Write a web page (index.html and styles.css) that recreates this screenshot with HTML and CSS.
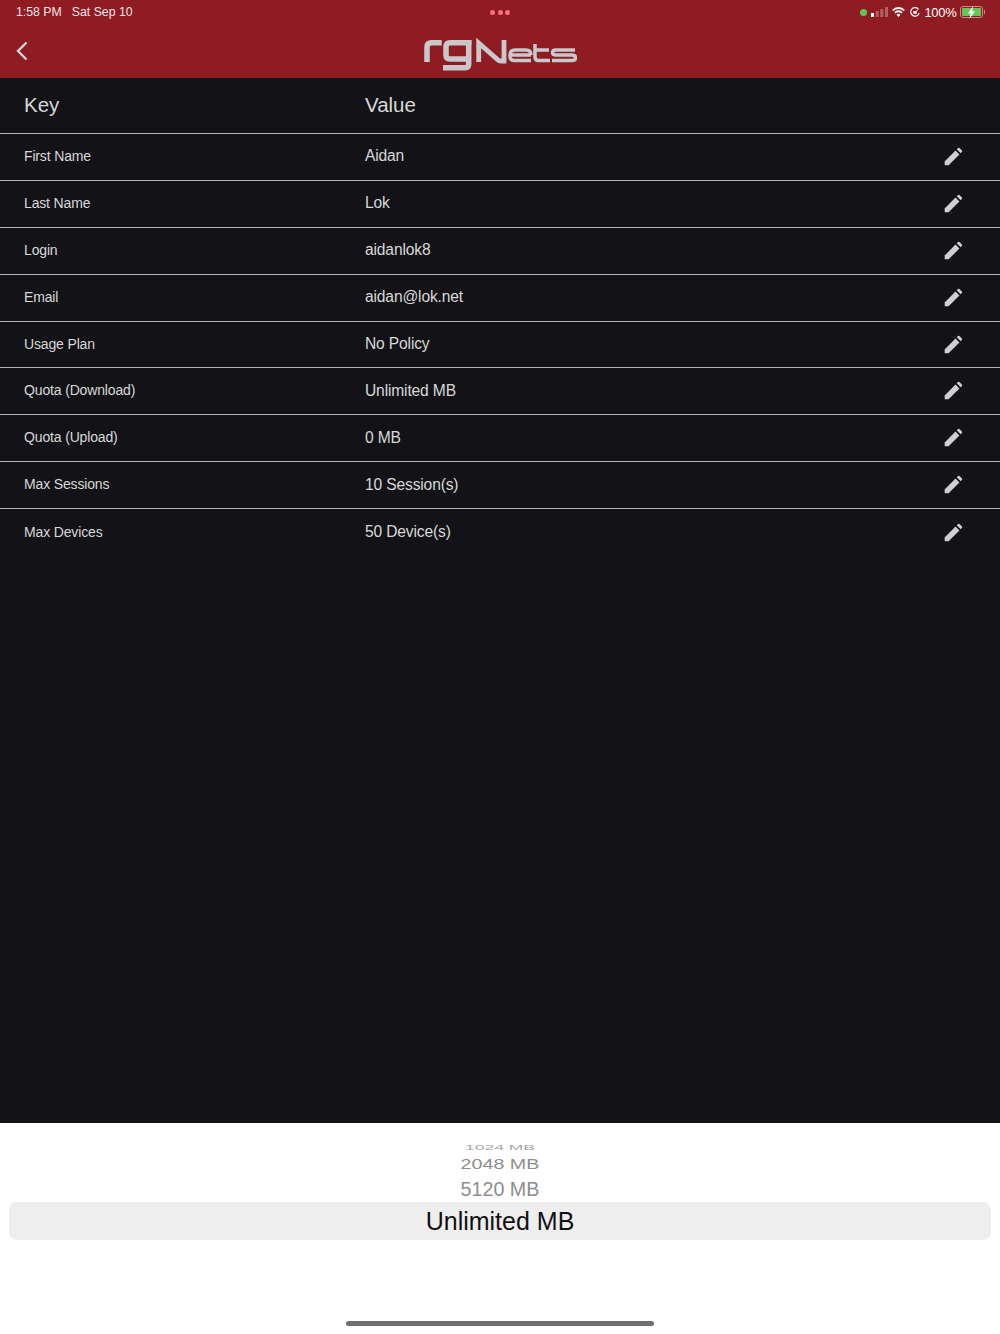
FILE: index.html
```html
<!DOCTYPE html>
<html lang="en">
<head>
  <meta charset="UTF-8" />
  <title>rgNets</title>
  <link rel="stylesheet" href="styles.css">
</head>
<body>
  <div class="app">
    <header class="topbar">
      <div class="status">
        <div class="status-left"><span>1:58 PM</span><span>Sat Sep 10</span></div>
        <div class="dots"><i></i><i></i><i></i></div>
        <div class="status-right">
          <i class="green-dot"></i>
          <svg class="signal" width="17" height="10" viewBox="0 0 17 10">
            <rect x="0" y="6" width="3" height="4" fill="#fff"/>
            <rect x="4.700" y="4" width="3" height="6" fill="#fff" opacity=".3"/>
            <rect x="9.300" y="2" width="3" height="8" fill="#fff" opacity=".3"/>
            <rect x="14" y="0" width="3" height="10" fill="#fff" opacity=".3"/>
          </svg>
          <svg class="wifi" width="13" height="10" viewBox="0 0 13 10" fill="none" stroke="#fff" stroke-width="1.800">
            <path d="M.7 3.500a8 8 0 0 1 11.600 0"/>
            <path d="M2.900 5.800a5 5 0 0 1 7.200 0"/>
            <path d="M6.500 10 4.500 7.800a2.800 2.800 0 0 1 4 0z" fill="#fff" stroke="none"/>
          </svg>
          <svg class="rotation" width="10" height="10" viewBox="0 0 10 10" fill="none" stroke="#fff" stroke-width="1.200">
            <path d="M9.200 6A4.300 4.300 0 1 1 7.700 1.500"/>
            <path d="M6.300.4 8.300 1.700 7 3.700" stroke-width="1"/>
            <rect x="3.300" y="4" width="3.400" height="2.800" fill="#fff" stroke="none"/>
          </svg>
          <span class="pct">100%</span>
          <span class="battery"><span class="battery-fill"></span>
            <svg class="bolt" width="9" height="13" viewBox="0 0 9 13"><path d="M6 0 1 7.500h2.500L2.500 13 8 5.200H5z" fill="#fff"/></svg>
          </span>
          <i class="battery-cap"></i>
        </div>
      </div>
      <div class="navbar">
        <svg class="back" width="12" height="20" viewBox="0 0 12 20" fill="none" stroke="#d6d6d6" stroke-width="2.400">
          <path d="M10.500 1.500 2 10l8.500 8.500"/>
        </svg>
        <svg class="logo" width="154" height="34" viewBox="0 0 154 34" fill="none" stroke="#c9c9cb" stroke-width="5.500">
          <path d="M4 24V9q0-4.300 4.300-4.300H18.700"/>
          <path d="M48.700 4.700H27q-4 0-4 4v8.300q0 4 4 4H45.700M45.700 4.700V26q0 3.700-3.700 3.700H20"/>
          <path d="M55.700 24V5L75 22q1 1 3 1h3V2" stroke-width="4.800"/>
          <path d="M88 17h20M108 17q0-5-5-5H92q-5 0-5 5v1.500q0 4 4.500 4H108" stroke-width="3.500"/>
          <path d="M112 6v13q0 3.500 3.500 3.500H127M112 12h14" stroke-width="3.500"/>
          <path d="M152 12h-19q-3.500 0-3.500 2.500t3.500 2.500h16q3.500 0 3.500 2.700t-3.500 2.800h-20" stroke-width="3.500"/>
        </svg>
      </div>
    </header>

    <main class="content">
      <div class="row head">
        <div class="key">Key</div>
        <div class="value">Value</div>
      </div>
      <div class="row">
        <div class="key">First Name</div>
        <div class="value">Aidan</div>
        <svg class="edit" viewBox="0 0 24 24"><use href="#pencil"/></svg>
      </div>
      <div class="row">
        <div class="key">Last Name</div>
        <div class="value">Lok</div>
        <svg class="edit" viewBox="0 0 24 24"><use href="#pencil"/></svg>
      </div>
      <div class="row">
        <div class="key">Login</div>
        <div class="value">aidanlok8</div>
        <svg class="edit" viewBox="0 0 24 24"><use href="#pencil"/></svg>
      </div>
      <div class="row">
        <div class="key">Email</div>
        <div class="value">aidan@lok.net</div>
        <svg class="edit" viewBox="0 0 24 24"><use href="#pencil"/></svg>
      </div>
      <div class="row">
        <div class="key">Usage Plan</div>
        <div class="value">No Policy</div>
        <svg class="edit" viewBox="0 0 24 24"><use href="#pencil"/></svg>
      </div>
      <div class="row">
        <div class="key">Quota (Download)</div>
        <div class="value">Unlimited MB</div>
        <svg class="edit" viewBox="0 0 24 24"><use href="#pencil"/></svg>
      </div>
      <div class="row">
        <div class="key">Quota (Upload)</div>
        <div class="value">0 MB</div>
        <svg class="edit" viewBox="0 0 24 24"><use href="#pencil"/></svg>
      </div>
      <div class="row">
        <div class="key">Max Sessions</div>
        <div class="value">10 Session(s)</div>
        <svg class="edit" viewBox="0 0 24 24"><use href="#pencil"/></svg>
      </div>
      <div class="row last">
        <div class="key">Max Devices</div>
        <div class="value">50 Device(s)</div>
        <svg class="edit" viewBox="0 0 24 24"><use href="#pencil"/></svg>
      </div>
    </main>

    <section class="picker">
      <div class="option far">1024 MB</div>
      <div class="option mid">2048 MB</div>
      <div class="option near">5120 MB</div>
      <div class="selected">Unlimited MB</div>
      <div class="home-bar"></div>
    </section>
  </div>

  <svg class="defs" width="0" height="0">
    <symbol id="pencil" viewBox="0 0 24 24">
      <path d="M2 22v-4.700L15 4.300 19.700 9 6.700 22z" fill="#d0d0d0"/>
      <path d="M16.500 2.800 18 1.300a1.200 1.200 0 0 1 1.700 0l3 3a1.200 1.200 0 0 1 0 1.700l-1.500 1.500z" fill="#d0d0d0"/>
    </symbol>
  </svg>
</body>
</html>
```
FILE: styles.css
```css
* {
  box-sizing: border-box;
}
body {
  margin: 0;
  font-family: 'Liberation Sans', Arial, sans-serif;
  background: #131317;
}
.app {
  width: 1000px;
  height: 1334px;
  display: flex;
  flex-direction: column;
  overflow: hidden;
}
.topbar {
  height: 78px;
  background: #8f1b23;
  color: #fff;
}
.status {
  height: 24px;
  padding: 0 16px;
  display: grid;
  grid-template-columns: 1fr auto 1fr;
  align-items: center;
  font-size: 12.300px;
}
.status-left {
  display: flex;
  gap: 10px;
  color: #f4e6e7;
}
.dots {
  display: flex;
  gap: 2.500px;
}
.dots i {
  width: 5px;
  height: 5px;
  border-radius: 50%;
  background: #fb6f80;
}
.status-right {
  display: flex;
  align-items: center;
  justify-content: flex-end;
  margin-right: -1px;
}
.green-dot {
  width: 7px;
  height: 7px;
  border-radius: 50%;
  background: #5fc45a;
}
.signal {
  margin-left: 4px;
}
.wifi {
  margin-left: 4px;
}
.rotation {
  margin-left: 5px;
}
.pct {
  margin-left: 4px;
  font-size: 13px;
  letter-spacing: -.3px;
}
.battery {
  position: relative;
  width: 23px;
  height: 12px;
  border: 1px solid #c98a8f;
  border-radius: 3px;
  padding: 1px;
  margin-left: 3.500px;
}
.battery-fill {
  display: block;
  height: 100%;
  background: #62c955;
  border-radius: 1px;
}
.battery-cap {
  width: 1.500px;
  height: 4px;
  background: #c98a8f;
  margin-left: .5px;
}
.bolt {
  position: absolute;
  left: 6px;
  top: -1.500px;
}
.navbar {
  height: 54px;
  position: relative;
  display: flex;
  align-items: center;
  justify-content: center;
}
.back {
  position: absolute;
  left: 16px;
  top: 17px;
}
.logo {
  margin-top: 8px;
}
.content {
  flex: 1;
  background: #131317;
  color: #d8d8d8;
}
.row {
  height: 46.900px;
  padding: 0 37px 0 24px;
  display: flex;
  align-items: center;
  border-bottom: 1px solid #b5b5b5;
  font-size: 14px;
  letter-spacing: -.15px;
}
.row.head {
  height: 56px;
  font-size: 20.500px;
  letter-spacing: 0;
}
.row.last {
  border-bottom: none;
}
.key {
  width: 341px;
  margin-bottom: 2px;
}
.value {
  flex: 1;
  font-size: 15.600px;
  margin-bottom: 1px;
}
.head .value {
  font-size: 20.500px;
  margin-bottom: 2px;
}
.edit {
  width: 20px;
  height: 20px;
}
.defs {
  position: absolute;
}
.picker {
  height: 211px;
  background: #fff;
  position: relative;
  padding: 0 9px;
  display: flex;
  flex-direction: column;
  align-items: center;
}
.option {
  color: #8e8e8e;
  text-align: center;
  width: 100%;
}
.far {
  margin-top: 20px;
  height: 10px;
  line-height: 10px;
  font-size: 17.500px;
  transform: scaleY(.4);
  color: #a5a5a5;
}
.mid {
  margin-top: 3px;
  height: 16px;
  line-height: 16px;
  font-size: 19.700px;
  transform: scaleY(.78);
}
.near {
  margin-top: 7px;
  height: 20px;
  line-height: 20px;
  font-size: 19.700px;
}
.selected {
  margin-top: 3px;
  width: 100%;
  height: 38px;
  line-height: 38px;
  background: #eeeeee;
  border-radius: 8px;
  text-align: center;
  font-size: 25px;
  color: #111;
}
.home-bar {
  position: absolute;
  left: 346px;
  bottom: 8px;
  width: 308px;
  height: 5px;
  border-radius: 3px;
  background: #707070;
}
```
